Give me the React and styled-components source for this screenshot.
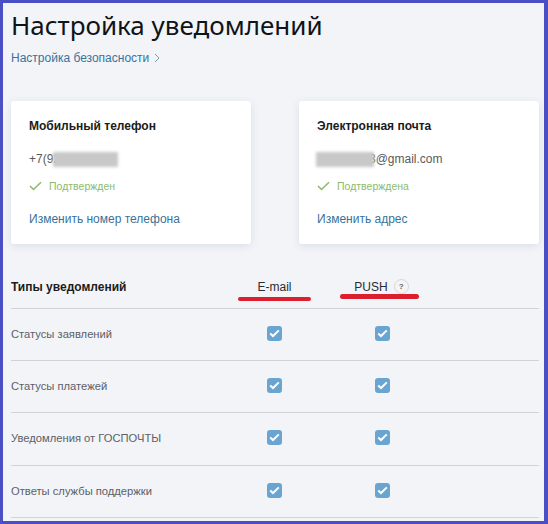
import React from "react";
import styled, { createGlobalStyle } from "styled-components";

const Global = createGlobalStyle`
  html, body { margin: 0; padding: 0; background: #f2f4f8; }
  * { box-sizing: border-box; }
`;

const Frame = styled.div`
  width: 548px;
  height: 524px;
  overflow: hidden;
  border-style: solid;
  border-color: #4a4fc4;
  border-width: 3px 4px 3px 3px;
  background: #f2f4f8;
  padding: 0 5px 0 8px;
  font-family: "Liberation Sans", Arial, sans-serif;
`;

const Title = styled.h1`
  margin: 4px 0 0;
  font-family: "Noto Sans", "Open Sans", sans-serif;
  font-weight: 400;
  font-size: 26px;
  line-height: 36px;
  color: #101418;
`;

const TopLink = styled.a`
  display: flex;
  align-items: center;
  gap: 5px;
  margin-top: 7px;
  font-size: 12px;
  line-height: 16px;
  color: #3a7299;
`;

const Cards = styled.div`
  display: grid;
  grid-template-columns: 240px 240px;
  justify-content: space-between;
  margin-top: 35px;
`;

const Card = styled.section`
  height: 143px;
  background: #fff;
  border-radius: 3px;
  box-shadow: 0 2px 8px rgba(60, 70, 100, 0.12);
  padding: 17px 18px 0;
`;

const CardTitle = styled.div`
  font-size: 12px;
  line-height: 16px;
  font-weight: 700;
  color: #1a1c20;
`;

const Contact = styled.div`
  margin-top: 17px;
  font-size: 12px;
  line-height: 16px;
  color: #5a5a5a;
  white-space: nowrap;
  display: flex;
  align-items: center;
`;

const Redacted = styled.span`
  display: inline-block;
  width: ${(p) => p.$w}px;
  height: 15px;
  margin: ${(p) => p.$m || "0"};
  background: #c8c8c8;
  filter: blur(1.5px);
`;

const Status = styled.div`
  display: flex;
  align-items: center;
  gap: 7px;
  margin-top: 11px;
  font-size: 10.5px;
  line-height: 16px;
  color: #8bbb6c;
`;

const CardLink = styled.a`
  display: block;
  margin-top: 17px;
  font-size: 12px;
  line-height: 16px;
  color: #3a7299;
`;

const Table = styled.div`
  margin-top: 23px;
`;

const Row = styled.div`
  display: grid;
  grid-template-columns: 210px 107px 109px 1fr;
  align-items: center;
  height: ${(p) => (p.$head ? "42px" : "52.2px")};
  border-bottom: 1px solid #d0d3d8;
  padding-bottom: ${(p) => (p.$head ? "2px" : "0")};
`;

const HeadLabel = styled.div`
  font-size: 12px;
  font-weight: 700;
  color: #1a1c20;
`;

const RowLabel = styled.div`
  font-size: 11.2px;
  color: #5c5f66;
  padding-bottom: 1px;
`;

const HeadCell = styled.div`
  position: relative;
  display: flex;
  justify-content: center;
  align-items: center;
  gap: 6px;
  font-size: 12px;
  color: #2a2c30;
  padding-right: ${(p) => p.$pr || 0}px;
`;

const Underline = styled.span`
  position: absolute;
  left: ${(p) => p.$left}px;
  top: ${(p) => p.$top}px;
  width: ${(p) => p.$w}px;
  height: 4.5px;
  border-radius: 3px;
  background: #dc1f2e;
`;

const Help = styled.span`
  width: 15px;
  height: 15px;
  border: 1px solid #d6d6da;
  border-radius: 50%;
  background: #f4f4f6;
  display: flex;
  align-items: center;
  justify-content: center;
  font-size: 8px;
  font-weight: 700;
  color: #666;
`;

const CheckCell = styled.div`
  display: flex;
  justify-content: center;
  padding-bottom: 2px;
`;

const Box = styled.span`
  width: 15px;
  height: 15px;
  border-radius: 3px;
  background: #6aa5d2;
  display: flex;
  align-items: center;
  justify-content: center;
`;

const Tick = () => (
  <svg width="13" height="10" viewBox="0 0 13 10" fill="none">
    <path d="M1 5l3.5 3.5L12 1.2" stroke="#8bbb6c" strokeWidth="1.6" />
  </svg>
);

const Check = () => (
  <Box>
    <svg width="11" height="9" viewBox="0 0 11 9" fill="none">
      <path d="M1.2 4.4l2.8 2.6L9.8 1.4" stroke="#fff" strokeWidth="2" />
    </svg>
  </Box>
);

const rows = [
  "Статусы заявлений",
  "Статусы платежей",
  "Уведомления от ГОСПОЧТЫ",
  "Ответы службы поддержки",
];

export default function App() {
  return (
    <>
      <Global />
      <Frame>
        <Title>Настройка уведомлений</Title>
        <TopLink>
          Настройка безопасности
          <svg width="6" height="10" viewBox="0 0 6 10" fill="none">
            <path d="M1 1l4 4-4 4" stroke="#7f9fb8" strokeWidth="1" />
          </svg>
        </TopLink>
        <Cards>
          <Card>
            <CardTitle>Мобильный телефон</CardTitle>
            <Contact>
              +7(92
              <Redacted $w={65} $m="0 0 0 -7px" />
            </Contact>
            <Status>
              <Tick />
              Подтвержден
            </Status>
            <CardLink>Изменить номер телефона</CardLink>
          </Card>
          <Card>
            <CardTitle>Электронная почта</CardTitle>
            <Contact>
              <Redacted $w={58} $m="0 -5px 0 -1px" />
              3@gmail.com
            </Contact>
            <Status>
              <Tick />
              Подтверждена
            </Status>
            <CardLink>Изменить адрес</CardLink>
          </Card>
        </Cards>
        <Table>
          <Row $head>
            <HeadLabel>Типы уведомлений</HeadLabel>
            <HeadCell>
              E-mail
              <Underline $left={17} $top={17} $w={73} />
            </HeadCell>
            <HeadCell $pr={2}>
              PUSH
              <Help>?</Help>
              <Underline $left={12} $top={15} $w={79} />
            </HeadCell>
          </Row>
          {rows.map((r) => (
            <Row key={r}>
              <RowLabel>{r}</RowLabel>
              <CheckCell>
                <Check />
              </CheckCell>
              <CheckCell>
                <Check />
              </CheckCell>
            </Row>
          ))}
        </Table>
      </Frame>
    </>
  );
}
